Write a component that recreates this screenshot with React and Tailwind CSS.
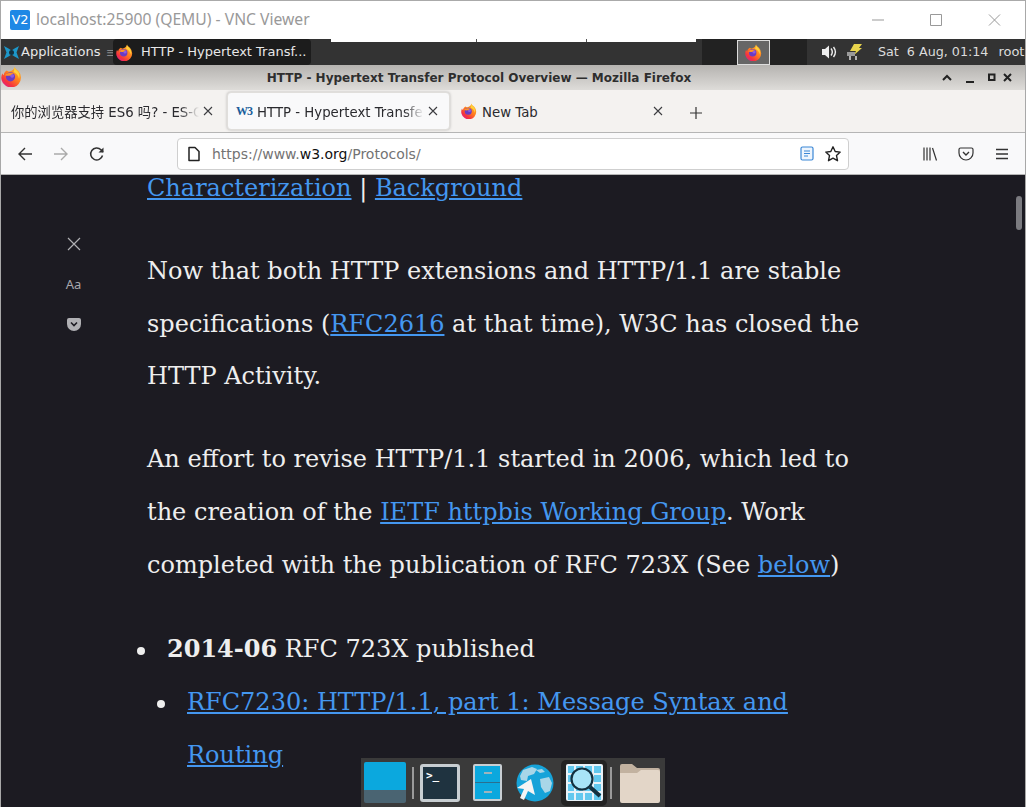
const linkCls = "text-[#4497f0] underline";

function Firefox({ size = 18 }) {
  return (
    <svg width={size} height={size} viewBox="0 0 32 32" className="shrink-0">
      <defs>
        <linearGradient id="ffa" x1="0.85" y1="0.1" x2="0.2" y2="0.95">
          <stop offset="0" stopColor="#ffb52e" />
          <stop offset="0.45" stopColor="#ff7a1f" />
          <stop offset="0.8" stopColor="#f5333f" />
          <stop offset="1" stopColor="#e3207f" />
        </linearGradient>
      </defs>
      <path d="M21 1c0 3 3 4 5.500 6.500A15 15 0 1 1 2 11c.5 1.500 1 2.500 2 3 .5-3 2-5.500 5-7 1 1 2 1.500 4 1.500 3-1 7-3 8-7.500z" fill="url(#ffa)" />
      <path d="M20 1.500c1 3.500 4.500 5 6.500 8 2 3.500 2 7 1 10-1-5-3.500-8.500-8.500-10.500 1.500-2.500 1.500-5 1-7.500z" fill="#ffd23a" />
      <circle cx="14.500" cy="16.500" r="7" fill="#6a3cc4" />
      <circle cx="17" cy="15" r="3" fill="#8f5be0" />
      <path d="M6 14c3-4 10-5 15-2-3-.5-5 .5-6.500 2.500-3 .5-6 .5-8.500-.5z" fill="#ff9426" />
    </svg>
  );
}

function PanelArea() {
  return (
    <div className="relative flex h-[26px] items-center bg-[#333333] text-[13px] text-[#e8e8e8]">
      <span className="absolute left-[330px] top-0 h-[3px] w-[365px] bg-white" />
      <span className="absolute left-[475px] top-0 h-[3px] w-px bg-[#555]" />
      <span className="absolute left-[585px] top-0 h-[3px] w-px bg-[#555]" />
      <svg width="15" height="15" viewBox="0 0 15 15" className="ml-[3px]">
        <path d="M0 1l4.500 2.500L7.500 5.500l3-2L15 1l-2.500 6.500L15 14l-4.500-2.500-3-2-3 2L0 14l2.500-6.500z" fill="#1d97c9" />
        <circle cx="7.500" cy="7.500" r="2.500" fill="#14303f" />
      </svg>
      <span className="ml-[2px] w-[85px] whitespace-nowrap">Applications</span>
      <span className="w-[6px] text-[#888] leading-none">≡</span>
      <div className="ml-[1px] flex h-[26px] w-[198px] items-center rounded-[4px] bg-[#1c1c1c] pl-[3px]">
        <Firefox size={17} />
        <span className="ml-[8px] whitespace-nowrap">HTTP - Hypertext Transf...</span>
      </div>
      <div className="ml-[391px] flex h-[26px] w-[105px] items-center bg-[#222222] pl-[35px]">
        <div className="flex h-[25px] w-[33px] items-center justify-center border border-[#ddd] bg-[#666]">
          <Firefox size={17} />
        </div>
      </div>
      <svg width="17" height="16" viewBox="0 0 17 16" className="ml-[14px]">
        <path d="M1 5h3l4-3.500v13L4 11H1z" fill="#eee" />
        <path d="M10 4.500c1.500 2 1.500 5 0 7M12.500 3c2.300 3 2.300 7 0 10" stroke="#eee" strokeWidth="1.400" fill="none" />
      </svg>
      <svg width="17" height="19" viewBox="0 0 17 19" className="ml-[8px]">
        <path d="M8 1h8l-3 4h3l-8 7 2-4H4z" fill="#e8d44d" />
        <path d="M1 9h8v4H1z" fill="#999" />
        <path d="M4 13v4M10 13v4" stroke="#ddd" strokeWidth="1.500" />
      </svg>
      <span className="ml-[15px] whitespace-pre text-[12.7px] text-[#dcdcdc]">Sat  6 Aug, 01:14</span>
      <span className="ml-[10px] whitespace-nowrap text-[#dcdcdc]">root</span>
    </div>
  );
}

function Close({ className = "" }) {
  return (
    <svg width="10" height="10" viewBox="0 0 10 10" className={`shrink-0 ${className}`}>
      <path d="M1 1l8 8M9 1l-8 8" stroke="#3c3c40" strokeWidth="1.100" />
    </svg>
  );
}

function Toolbar() {
  return (
    <div className="flex h-[42px] items-center border-b border-[#b5b5b5] bg-[#f9f9fa] text-[14px]">
      <svg width="16" height="16" viewBox="0 0 16 16" className="ml-[16px]">
        <path d="M15 8H2M8 2L2 8l6 6" stroke="#333" strokeWidth="1.400" fill="none" />
      </svg>
      <svg width="16" height="16" viewBox="0 0 16 16" className="ml-[20px]">
        <path d="M1 8h13M8 2l6 6-6 6" stroke="#aaa" strokeWidth="1.400" fill="none" />
      </svg>
      <svg width="16" height="16" viewBox="0 0 16 16" className="ml-[20px]">
        <path d="M13.500 9.500A6 6 0 1 1 12 3.800L14 6" stroke="#333" strokeWidth="1.500" fill="none" />
        <path d="M14.500 1.500v5h-5z" fill="#333" />
      </svg>
      <div className="ml-[72px] flex h-[32px] w-[672px] items-center rounded-[4px] border border-[#cfcfcf] bg-white">
        <svg width="14" height="16" viewBox="0 0 14 16" className="ml-[9px]">
          <path d="M2 1.500h6l4 4v9H2z" fill="none" stroke="#222" strokeWidth="1.500" strokeLinejoin="round" />
        </svg>
        <span className="ml-[11px] whitespace-nowrap pt-[2px] text-[#737373]">
          https://www.<span className="text-[#111]">w3.org</span>/Protocols/
        </span>
        <div className="ml-auto flex items-center">
          <svg width="14" height="15" viewBox="0 0 14 15">
            <rect x="1" y="1" width="12" height="13" rx="1.500" fill="#eef5fd" stroke="#3b87d6" strokeWidth="1.200" />
            <path d="M4 5h6M4 7.500h6M4 10h4" stroke="#3b87d6" strokeWidth="1.100" />
          </svg>
          <svg width="18" height="18" viewBox="0 0 18 18" className="ml-[10px] mr-[6px]">
            <path d="M9 1.800l2.200 4.700 5 .6-3.700 3.500 1 5.100L9 13.200l-4.500 2.500 1-5.100L1.800 7.100l5-.6z" fill="none" stroke="#222" strokeWidth="1.400" strokeLinejoin="round" />
          </svg>
        </div>
      </div>
      <svg width="16" height="16" viewBox="0 0 16 16" className="ml-[73px]">
        <path d="M2 1.500v13M5 1.500v13M8 1.500v13M10.500 2l4 12.500" stroke="#333" strokeWidth="1.200" fill="none" />
      </svg>
      <svg width="16" height="16" viewBox="0 0 16 16" className="ml-[20px]">
        <path d="M2.500 2h11A1.500 1.500 0 0 1 15 3.500V7a7 7 0 0 1-14 0V3.500A1.500 1.500 0 0 1 2.500 2z" fill="none" stroke="#333" strokeWidth="1.200" />
        <path d="M5 6l3 3 3-3" fill="none" stroke="#333" strokeWidth="1.400" />
      </svg>
      <svg width="16" height="16" viewBox="0 0 16 16" className="ml-[20px]">
        <path d="M2 3.500h12M2 8h12M2 12.500h12" stroke="#333" strokeWidth="1.300" />
      </svg>
    </div>
  );
}

function Dock() {
  return (
    <div className="absolute bottom-0 left-[360px] flex h-[49px] w-[304px] items-center bg-[#3a3a3a] pl-[3px]">
      <div className="flex h-[41px] w-[42px] flex-col">
        <div className="h-[28px] rounded-t-[2px] bg-[#0ba8de]" />
        <div className="h-[13px] rounded-b-[2px] bg-[#4a6472]" />
      </div>
      <div className="ml-[6px] h-[32px] w-[2px] bg-[#9a9a9a]" />
      <div className="ml-[6px] h-[38px] w-[40px] rounded-[3px] border-[3px] border-[#c8ced2] bg-[#1f3340] pl-[3px] pt-[3px] font-['DejaVu_Sans_Mono',monospace] text-[11px] font-bold leading-none text-white">
        &gt;_
      </div>
      <div className="ml-[13px] flex h-[37px] w-[29px] flex-col justify-between rounded-[2px] border-2 border-[#c8ced2] bg-[#0ba8de] py-[6px]">
        <span className="mx-auto h-[2px] w-[8px] bg-[#9fb4bd]" />
        <span className="h-px bg-[#2b6f8e]" />
        <span className="mx-auto h-[2px] w-[8px] bg-[#9fb4bd]" />
      </div>
      <svg width="38" height="38" viewBox="0 0 38 38" className="ml-[14px]">
        <circle cx="19" cy="19" r="18.500" fill="#16a3d9" />
        <path d="M7 6l9-3 5 2-3 5-6 2-1 5-6-1-1-4zM24 15l9-2 3 6-2 8-5 2-4-6zM20 6l6-1 3 3-5 1z" fill="#a8d6e8" />
        <path d="M15 15l4 16-7-4-4 9-4-2 4-9-7-1z" fill="#f4f4f4" />
      </svg>
      <div className="ml-[7px] flex h-[46px] w-[46px] items-center justify-center rounded-[5px] bg-[#222]">
        <div className="relative h-[37px] w-[37px] overflow-hidden rounded-[2px] bg-[#e8f2f8]">
          <div className="grid grid-cols-4 gap-[2px] p-[2px]">
            {Array.from({ length: 16 }).map((_, i) => (
              <span key={i} className="h-[7px] bg-[#62c8ee]" />
            ))}
          </div>
          <svg width="37" height="37" viewBox="0 0 37 37" className="absolute left-0 top-0">
            <circle cx="16" cy="15" r="10.500" fill="#a8e4f7" stroke="#13303f" strokeWidth="2.200" />
            <path d="M24 23l10 9" stroke="#13303f" strokeWidth="4" />
          </svg>
        </div>
      </div>
      <div className="ml-[3px] h-[32px] w-[2px] bg-[#9a9a9a]" />
      <svg width="42" height="42" viewBox="0 0 42 42" className="ml-[7px]">
        <path d="M1 4a2 2 0 0 1 2-2h10l5 4h21a2 2 0 0 1 2 2v6H1z" fill="#c2b2a0" />
        <path d="M1 11h17l4-3h17a2 2 0 0 1 2 2v29a2 2 0 0 1-2 2H3a2 2 0 0 1-2-2z" fill="#e3d6c8" />
      </svg>
    </div>
  );
}

export default function App() {
  return (
    <div className="relative h-[807px] w-[1026px] overflow-hidden border-x border-[#a8a8a8] bg-white font-['DejaVu_Sans',sans-serif]">
      <div className="flex h-[39px] items-center border-t border-[#aaaaaa] bg-white">
        <div className="ml-[9px] flex h-[20px] w-[20px] items-center justify-center rounded-[2px] bg-[#1e88e5] text-[13px] text-white">
          V2
        </div>
        <span className="ml-[6px] whitespace-nowrap font-['Noto_Sans',sans-serif] text-[15.7px] text-[#999999]">
          localhost:25900 (QEMU) - VNC Viewer
        </span>
        <svg width="130" height="14" viewBox="0 0 130 14" className="ml-auto mr-[24px]">
          <path d="M1 7h12M59.500 1.500h11v11h-11zM118 1.500l11 11M129 1.500l-11 11" stroke="#999" fill="none" />
        </svg>
      </div>
      <PanelArea />
      <div className="relative flex h-[25px] items-center justify-center bg-gradient-to-b from-[#b5b3b0] to-[#dedcd9] pr-[68px] text-[12px] font-bold text-[#2e2e2e]">
        <span className="absolute left-[0px] top-[1px]">
          <Firefox size={21} />
        </span>
        HTTP - Hypertext Transfer Protocol Overview — Mozilla Firefox
        <svg width="72" height="12" viewBox="0 0 72 12" className="absolute right-[12px] top-[7px]">
          <path d="M2 8l4-4 4 4" fill="none" stroke="#222" strokeWidth="2" />
          <path d="M25 10h8" stroke="#222" strokeWidth="2" />
          <path d="M48 2.500h5.500v5.500H48z" fill="none" stroke="#222" strokeWidth="2" />
          <path d="M63 2l7 7M70 2l-7 7" stroke="#222" strokeWidth="2" />
        </svg>
      </div>
      <div className="flex h-[43px] items-center border-b border-[#b5b5b5] bg-[#f4f2f0] text-[13.3px] text-[#2a2a2e]">
        <div className="ml-[10px] flex w-[216px] items-center">
          <span className="w-[188px] overflow-hidden whitespace-nowrap pt-[3px] font-['DejaVu_Sans','Noto_Sans_CJK_SC',sans-serif] [mask-image:linear-gradient(to_right,black_90%,transparent)]">
            你的浏览器支持 ES6 吗?&nbsp;- ES-Checker
          </span>
          <Close className="ml-[4px]" />
        </div>
        <div className="flex h-[38px] w-[223px] items-center rounded-[4px] border border-[#e0dedb] bg-[#f9f9fa] shadow-[0_0_3px_rgba(0,0,0,0.25)]">
          <span className="ml-[8px] w-[15px] font-['Liberation_Serif',serif] text-[12px] font-bold tracking-[-1px] text-[#1a5e9a]">W3</span>
          <span className="ml-[6px] w-[167px] overflow-hidden whitespace-nowrap pt-[3px] [mask-image:linear-gradient(to_right,black_88%,transparent)]">
            HTTP - Hypertext Transfer Protocol
          </span>
          <Close className="ml-[4px]" />
        </div>
        <div className="flex w-[213px] items-center">
          <span className="ml-[11px]"><Firefox size={16} /></span>
          <span className="ml-[5px] pt-[3px]">New Tab</span>
          <Close className="ml-auto" />
        </div>
        <svg width="14" height="14" viewBox="0 0 14 14" className="ml-[26px] mt-[3px]">
          <path d="M7 1v12M1 7h12" stroke="#333" strokeWidth="1.200" />
        </svg>
      </div>
      <Toolbar />
      <div className="relative flex h-[632px] overflow-hidden bg-[#1c1b22] font-['DejaVu_Serif',serif] text-[24px] leading-[52.8px] text-[#eeeeee]">
        <div className="flex w-[146px] shrink-0 flex-col items-center pr-[1px] pt-[62px] text-[#a8a8ac]">
          <svg width="14" height="14" viewBox="0 0 14 14">
            <path d="M1 1l12 12M13 1L1 13" stroke="#b0b0b4" strokeWidth="1.200" />
          </svg>
          <span className="mt-[25px] font-['Noto_Sans',sans-serif] text-[13px] leading-[16px]">Aa</span>
          <svg width="14" height="13" viewBox="0 0 14 13" className="mt-[26px]">
            <path d="M2 0h10a2 2 0 0 1 2 2v4a7 7 0 0 1-14 0V2a2 2 0 0 1 2-2z" fill="#b0b0b4" />
            <path d="M4 4.500l3 3 3-3" stroke="#1c1b22" strokeWidth="1.600" fill="none" />
          </svg>
        </div>
        <div className="w-[730px]">
          <p className="mt-[-13px]">
            <a className={linkCls}>Characterization</a> | <a className={linkCls}>Background</a>
          </p>
          <p className="mt-[30px]">
            Now that both HTTP extensions and HTTP/1.1 are stable specifications (<a className={linkCls}>RFC2616</a> at that time), W3C has closed the HTTP Activity.
          </p>
          <p className="mt-[30px]">
            An effort to revise HTTP/1.1 started in 2006, which led to the creation of the{" "}
            <a className={linkCls}>IETF httpbis Working Group</a>. Work completed with the publication of RFC 723X (See{" "}
            <a className={linkCls}>below</a>)
          </p>
          <div className="mt-[31px] pl-[20px]">
            <div>
              <span className="ml-[-30px] mr-[22px] inline-block h-[8px] w-[8px] rounded-full bg-[#eeeeee] align-[2px]" />
              <b>2014-06</b> RFC 723X published
            </div>
            <div className="mt-[1px] pl-[20px]">
              <span className="ml-[-30px] mr-[22px] inline-block h-[8px] w-[8px] rounded-full bg-[#eeeeee] align-[2px]" />
              <a className={linkCls}>RFC7230: HTTP/1.1, part 1: Message Syntax and Routing</a>
            </div>
          </div>
        </div>
        <div className="absolute right-[3px] top-[21px] h-[34px] w-[6px] rounded-full bg-[#7b7b80]" />
      </div>
      <Dock />
    </div>
  );
}
